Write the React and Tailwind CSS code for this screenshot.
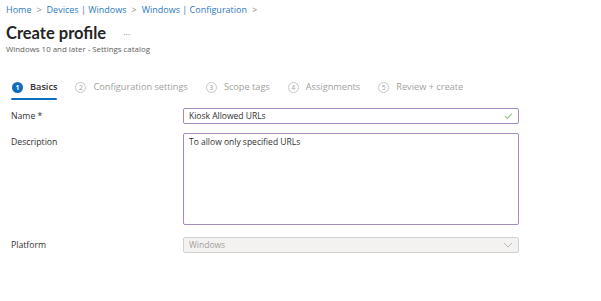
import React from "react";

function Step({ n, label, active }) {
  return (
    <div className="relative flex items-center gap-[7px] h-[20px]">
      {active ? (
        <span className="w-[11px] h-[11px] rounded-full bg-[#0f6cbd] text-white text-[7px] font-bold flex items-center justify-center leading-none">
          {n}
        </span>
      ) : (
        <span className="w-[11px] h-[11px] rounded-full border border-[#c8c6c4] text-[#a19f9d] text-[7px] flex items-center justify-center leading-none">
          {n}
        </span>
      )}
      <span
        className={
          active
            ? "text-[9.2px] leading-[12px] text-[#323130] font-semibold"
            : "text-[9.2px] leading-[12px] text-[#a19f9d]"
        }
      >
        {label}
      </span>
      {active && (
        <span className="absolute left-[-1px] right-0 bottom-[-3px] h-[2px] bg-[#0f6cbd] rounded" />
      )}
    </div>
  );
}

export default function App() {
  return (
    <div
      className="w-[601px] h-[301px] bg-white overflow-hidden"
      style={{ fontFamily: '"Open Sans", "Noto Sans", sans-serif' }}
    >
      <div className="pl-[6px] pt-[3px]">
        <div className="flex items-center gap-[5px] text-[9px] leading-[12px] text-[#2b79c2] h-[14px]">
          <span>Home</span>
          <span className="text-[#8a8886]">&gt;</span>
          <span>Devices | Windows</span>
          <span className="text-[#8a8886]">&gt;</span>
          <span>Windows | Configuration</span>
          <span className="text-[#8a8886]">&gt;</span>
        </div>
        <div className="flex items-center mt-[6px] h-[20px]">
          <span
            className="text-[16.5px] font-bold text-[#242424] leading-none"
            style={{ fontFamily: 'Lato, "Open Sans", sans-serif' }}
          >
            Create profile
          </span>
          <span className="ml-[17px] mt-[2px] text-[9px] text-[#8a8886] leading-none">
            ···
          </span>
        </div>
        <div className="mt-[2px] h-[10px] flex items-center text-[7.9px] text-[#605e5c] leading-none">
          Windows 10 and later - Settings catalog
        </div>
      </div>

      <div className="flex items-center pl-[12px] mt-[22px] gap-[18px]">
        <Step n="1" label="Basics" active />
        <Step n="2" label="Configuration settings" />
        <Step n="3" label="Scope tags" />
        <Step n="4" label="Assignments" />
        <Step n="5" label="Review + create" />
      </div>

      <div className="pl-[11px] mt-[11px] flex flex-col text-[8.7px] leading-[12px]">
        <div className="flex items-center h-[16px]">
          <div className="w-[172px] text-[#323130]">Name *</div>
          <div className="w-[336px] h-[16px] border border-[#a58bc0] rounded-[2px] flex items-center justify-between px-[5px]">
            <span className="text-[8.5px] text-[#323130]">Kiosk Allowed URLs</span>
            <svg width="9" height="8" viewBox="0 0 9 8">
              <path d="M1 4.2 L3.4 6.5 L8 1.5" fill="none" stroke="#8cc47a" strokeWidth="1.1" />
            </svg>
          </div>
        </div>

        <div className="flex mt-[9px]">
          <div className="w-[172px] text-[#323130] pt-[3px]">Description</div>
          <div className="w-[336px] h-[92px] border border-[#a58bc0] rounded-[2px] px-[5px] pt-[2px]">
            <span className="text-[8.5px] text-[#323130]">To allow only specified URLs</span>
          </div>
        </div>

        <div className="flex items-center mt-[12px] h-[16px]">
          <div className="w-[172px] text-[#323130]">Platform</div>
          <div className="w-[336px] h-[16px] border border-[#d2d0ce] bg-[#f3f2f1] rounded-[2px] flex items-center justify-between px-[5px]">
            <span className="text-[8.5px] text-[#a19f9d]">Windows</span>
            <svg width="10" height="6" viewBox="0 0 10 6">
              <path d="M1 1 L5 5 L9 1" fill="none" stroke="#b3b0ad" strokeWidth="0.9" />
            </svg>
          </div>
        </div>
      </div>
    </div>
  );
}
